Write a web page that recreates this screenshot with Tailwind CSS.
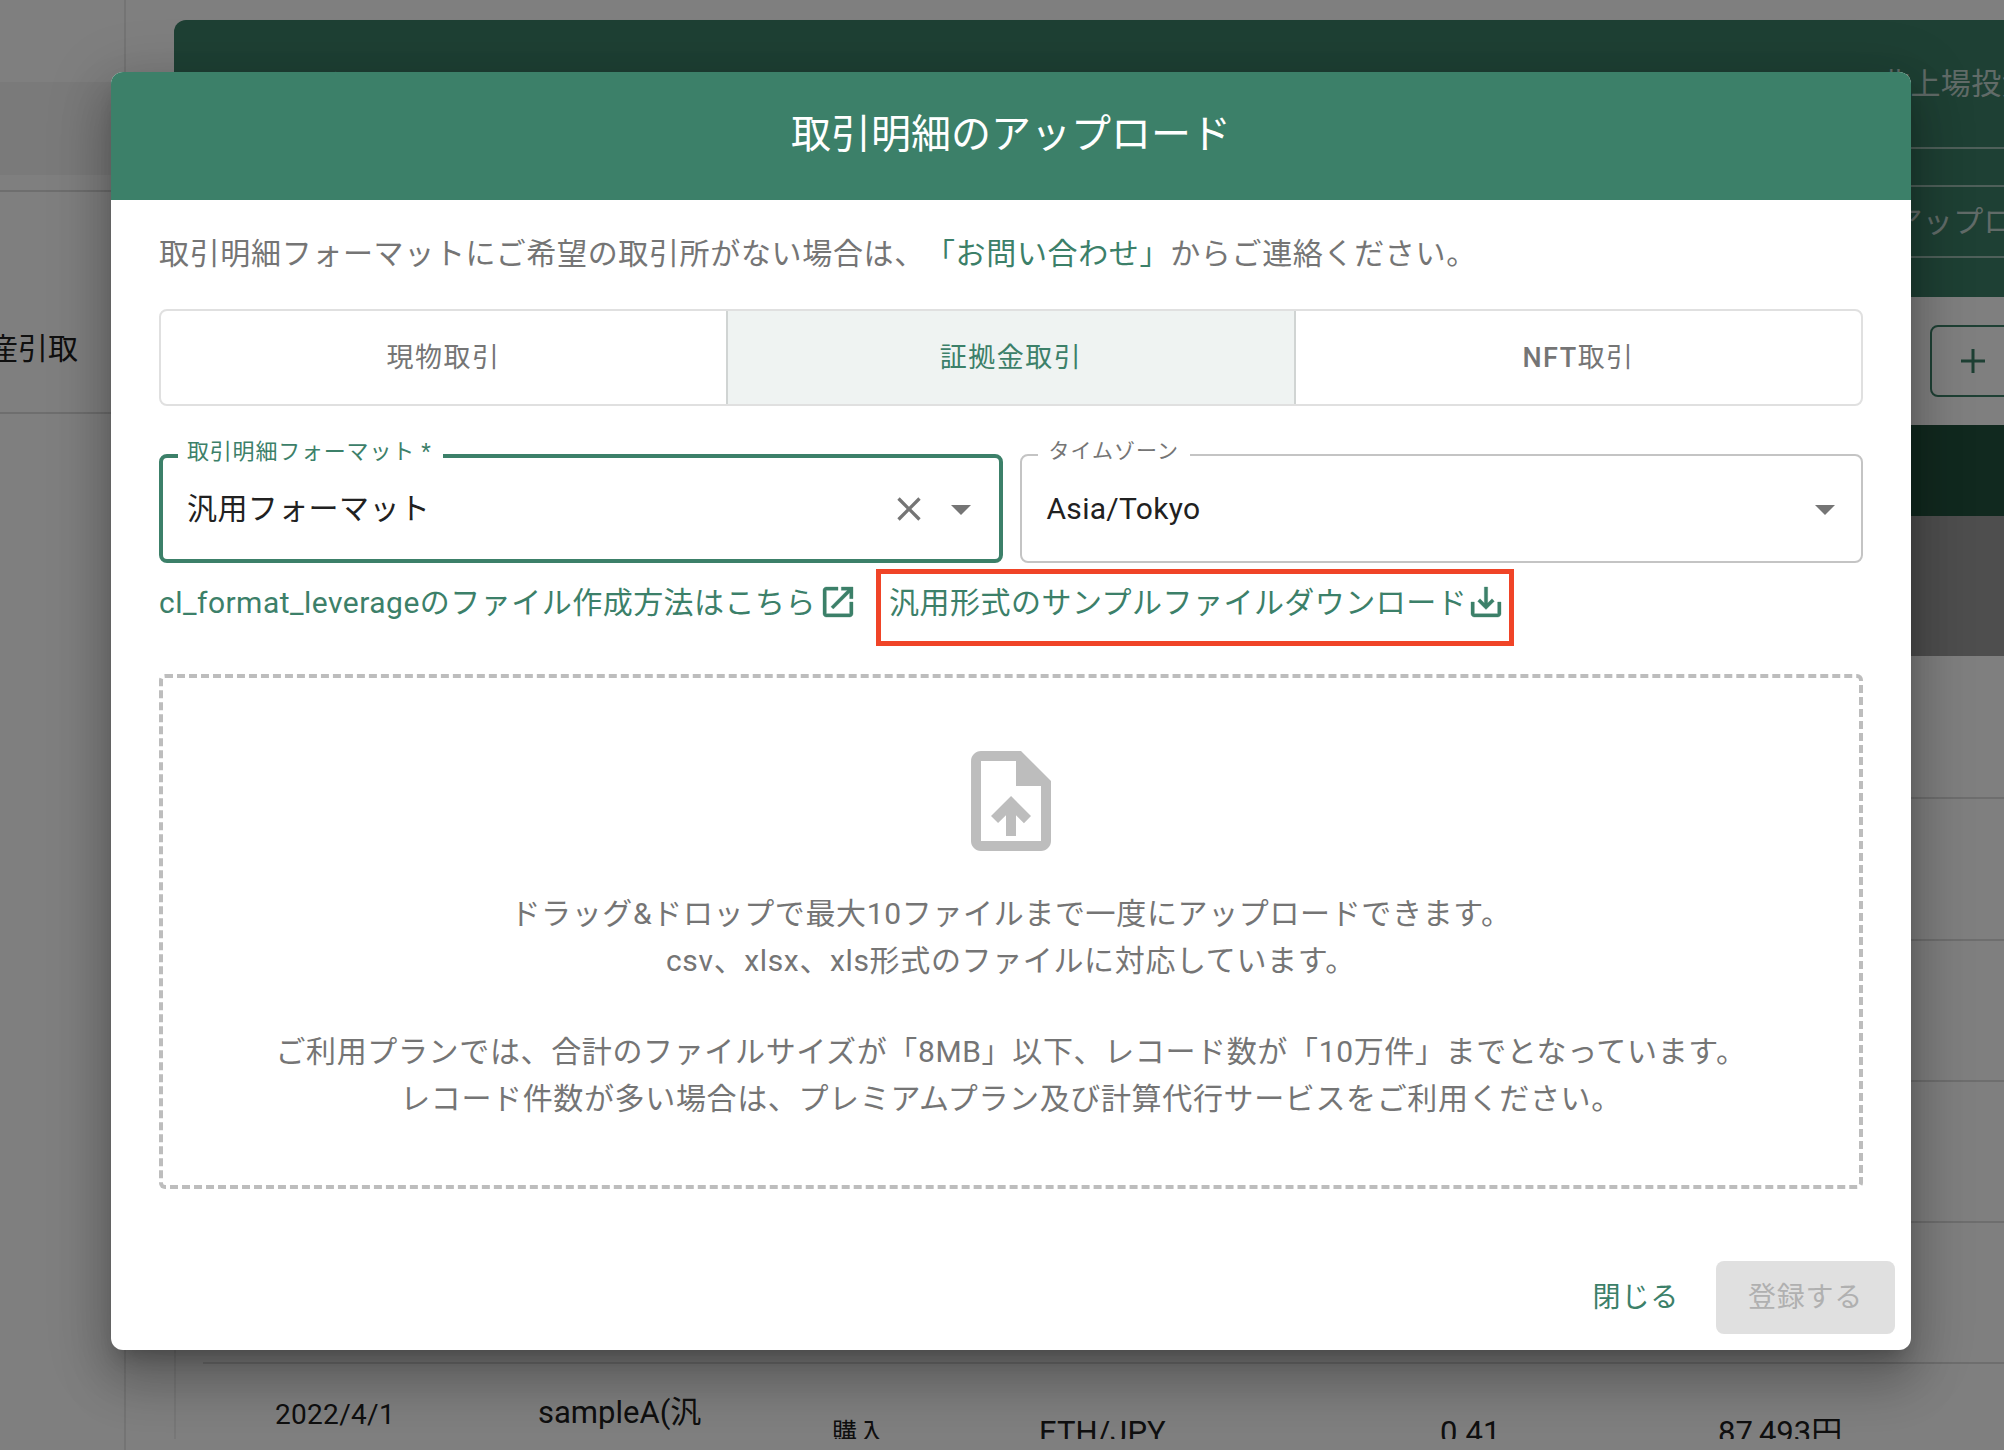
<!DOCTYPE html>
<html lang="ja">
<head>
  <meta charset="UTF-8">
  <title>取引明細のアップロード</title>
  <script src="https://cdn.jsdelivr.net/npm/@tailwindcss/browser@4"></script>
</head>
<body class="bg-white">
  <div class="relative w-[2004px] h-[1450px] overflow-hidden flex font-[Roboto,'Noto_Sans_CJK_JP',sans-serif] text-[#212121] [text-spacing-trim:space-all]">

    <!-- page behind the dialog -->
    <aside class="w-[126px] shrink-0 border-r-2 border-[#e8e8e8]">
      <div class="h-[82px]"></div>
      <div class="h-[93px] bg-[#f4f4f4]"></div>
      <div class="h-[17px] border-b-2 border-[#ddd]"></div>
      <div class="h-[222px] border-b-2 border-[#ddd] flex items-start justify-end pt-[137px] pr-[46px] whitespace-nowrap text-[30px] leading-[40px]">産引取</div>
    </aside>
    <main class="flex-1 min-w-0 pt-[20px] pl-[48px]">
      <div class="h-[277px] bg-[#3c8069] rounded-tl-xl text-white/70 text-[30px] whitespace-nowrap flex flex-col items-stretch">
        <div class="h-[129px] border-b-2 border-white/50 flex items-center justify-between">
          <span class="pl-[60px] pt-[6px]">取引所名　取引種別　取引日時</span>
          <span class="mr-[-28px] tracking-[0.4px]">非上場投資</span>
        </div>
        <div class="h-[38px] border-b-2 border-white/50"></div>
        <div class="h-[71px] border-b-2 border-white/50 flex items-center justify-end">
          <span class="mr-[-10px] tracking-[0.4px]">アップロ</span>
        </div>
      </div>
      <div class="h-[128px] flex items-center justify-end">
        <div class="w-[90px] h-[72px] mr-[-16px] rounded-l-lg border-2 border-[#3c8069] flex items-center pl-[27px] text-[#3c8069]">
          <svg class="w-[28px] h-[28px]" viewBox="0 0 28 28" fill="currentColor"><path d="M12.5 2h3v10.500H26v3H15.500V26h-3V15.500H2v-3h10.500z"/></svg>
        </div>
      </div>
      <div class="h-[91px] bg-[#22523e]"></div>
      <div class="h-[140px] bg-[#9c9c9c]"></div>
      <div class="border-l-2 border-[#eee] ml-0 pl-[27px]">
        <div class="h-[143px] border-b-2 border-[#ddd]"></div>
        <div class="h-[142px] border-b-2 border-[#ddd]"></div>
        <div class="h-[141px] border-b-2 border-[#ddd]"></div>
        <div class="h-[141px] border-b-2 border-[#ddd]"></div>
        <div class="h-[141px] border-b-2 border-[#ddd]"></div>
        <div class="h-[75px] flex whitespace-nowrap overflow-hidden">
          <span class="w-[335px] pl-[72px] pt-[30px] text-[28px] tracking-[0.3px]">2022/4/1</span>
          <span class="w-[294px] pt-[26px] text-[31px]">sampleA(汎</span>
          <span class="w-[207px] pt-[50px] text-[25px] tracking-[2px]">購入</span>
          <span class="w-[401px] pt-[51px] text-[31px] leading-[36px]">ETH/JPY</span>
          <span class="w-[278px] pt-[51px] text-[31px] leading-[36px]">0.41</span>
          <span class="pt-[51px] text-[31px] leading-[36px]">87,493円</span>
        </div>
      </div>
    </main>

    <!-- backdrop -->
    <div class="absolute inset-0 bg-black/50"></div>

    <!-- dialog -->
    <section class="absolute left-[111px] top-[72px] w-[1800px] h-[1278px] bg-white rounded-xl overflow-hidden flex flex-col shadow-[0_14px_19px_-9px_rgba(0,0,0,0.24),0_31px_49px_4px_rgba(0,0,0,0.18),0_12px_59px_10px_rgba(0,0,0,0.15)]">
      <header class="h-[128px] pb-[2px] shrink-0 bg-[#3c8069] flex items-center justify-center text-white text-[40px]">取引明細のアップロード</header>

      <div class="flex-1 flex flex-col px-[48px]">
        <p class="mt-[31px] h-[46px] leading-[46px] text-[30px] tracking-[0.66px] text-[#757575] whitespace-nowrap">取引明細フォーマットにご希望の取引所がない場合は、<a class="text-[#3c8069]">「お問い合わせ」</a>からご連絡ください。</p>

        <!-- tabs -->
        <div class="mt-[32px] h-[97px] grid grid-cols-[1fr_570px_1fr] rounded-lg border-2 border-[#e0e0e0] text-[27px] tracking-[1.5px] text-[#757575] overflow-hidden">
          <div class="flex items-center justify-center pt-[1px]">現物取引</div>
          <div class="flex items-center justify-center pt-[1px] bg-[#eff3f2] text-[#3c8069] border-x-2 border-[#d0d4d3]">証拠金取引</div>
          <div class="flex items-center justify-center pt-[1px]"><span class="font-medium">NFT</span>取引</div>
        </div>

        <!-- selects -->
        <div class="mt-[48px] grid grid-cols-2 gap-[17px]">
          <div class="relative h-[109px] rounded-lg border-[4px] border-[#3c8069] flex items-center pl-[24px] pr-[14px]">
            <span class="absolute left-[15px] top-[-18px] pl-[9px] pr-[11px] bg-white leading-[24px] text-[22px] tracking-[0.8px] text-[#3c8069] whitespace-nowrap">取引明細フォーマット *</span>
            <span class="flex-1 text-[30px] tracking-[0.4px]">汎用フォーマット</span>
            <svg class="w-[40px] h-[40px] mr-[8px] text-[#757575]" viewBox="0 0 24 24" fill="currentColor"><path d="M19 6.41 17.59 5 12 10.59 6.41 5 5 6.41 10.59 12 5 17.59 6.41 19 12 13.41 17.59 19 19 17.59 13.41 12z"/></svg>
            <svg class="w-[48px] h-[48px] text-[#757575]" viewBox="0 0 24 24" fill="currentColor"><path d="M7 10l5 5 5-5z"/></svg>
          </div>
          <div class="relative h-[109px] rounded-lg border-2 border-[#c4c4c4] flex items-center pl-[25px] pr-[12px]">
            <span class="absolute left-[16px] top-[-17px] px-[11px] bg-white leading-[24px] text-[21px] tracking-[1px] text-[#757575] whitespace-nowrap">タイムゾーン</span>
            <span class="flex-1 text-[30px] tracking-[0.3px]">Asia/Tokyo</span>
            <svg class="w-[48px] h-[48px] text-[#757575]" viewBox="0 0 24 24" fill="currentColor"><path d="M7 10l5 5 5-5z"/></svg>
          </div>
        </div>

        <!-- links -->
        <div class="mt-[19px] h-[40px] flex items-center text-[#3c8069] text-[30px] tracking-[0.48px] whitespace-nowrap">
          <a class="flex items-center">cl_format_leverageのファイル作成方法はこちら
            <svg class="w-[40px] h-[40px] ml-[2px]" viewBox="0 0 24 24" fill="currentColor" stroke="currentColor" stroke-width="0.2"><path d="M19 19H5V5h7V3H5c-1.11 0-2 .9-2 2v14c0 1.1.89 2 2 2h14c1.1 0 2-.9 2-2V12h-2v7zM14 3v2h3.59l-9.830 9.830 1.410 1.410L19 6.410V10h2V3h-7z"/></svg>
          </a>
          <a class="relative ml-[31px] flex items-center">汎用形式のサンプルファイルダウンロード
            <svg class="w-[40px] h-[40px] ml-[-1px]" viewBox="0 0 24 24" fill="currentColor" stroke="currentColor" stroke-width="0.2"><path d="M19 12v7H5v-7H3v7c0 1.1.9 2 2 2h14c1.1 0 2-.9 2-2v-7h-2zm-6 .67 2.59-2.58L17 11.5l-5 5-5-5 1.41-1.41L11 12.67V3h2z"/></svg>
            <span class="absolute left-[-13px] right-[-8px] top-[-11px] h-[77px] border-[5px] border-[#f04427]"></span>
          </a>
        </div>

        <!-- drop zone -->
        <div class="mt-[52px] h-[515px] rounded-md border-[4px] border-dashed border-[#bdbdbd] flex flex-col items-center pt-[63px] text-[#757575] text-[30px] leading-[46.5px] tracking-[0.64px] whitespace-nowrap">
          <svg class="w-[120px] h-[120px] text-[#bdbdbd]" viewBox="0 0 24 24" fill="currentColor"><path d="M14 2H6c-1.1 0-1.99.9-1.99 2L4 20c0 1.1.89 2 1.99 2H18c1.1 0 2-.9 2-2V8l-6-6zm4 18H6V4h7v5h5v11zM8 15.01l1.41 1.41L11 14.84V19h2v-4.16l1.59 1.59L16 15.01 12.01 11 8 15.01z"/></svg>
          <p class="mt-[30px]">ドラッグ&amp;ドロップで最大10ファイルまで一度にアップロードできます。</p>
          <p>csv、xlsx、xls形式のファイルに対応しています。</p>
          <p class="mt-[45px]">ご利用プランでは、合計のファイルサイズが「8MB」以下、レコード数が「10万件」までとなっています。</p>
          <p>レコード件数が多い場合は、プレミアムプラン及び計算代行サービスをご利用ください。</p>
        </div>
      </div>

      <!-- footer -->
      <footer class="h-[89px] pr-[16px] flex items-start justify-end text-[28px] tracking-[0.8px]">
        <button class="h-[73px] mr-[37px] text-[#3c8069]">閉じる</button>
        <button class="w-[179px] h-[73px] rounded-lg bg-[#e0e0e0] text-[#b0b0b0]">登録する</button>
      </footer>
    </section>
  </div>
</body>
</html>
